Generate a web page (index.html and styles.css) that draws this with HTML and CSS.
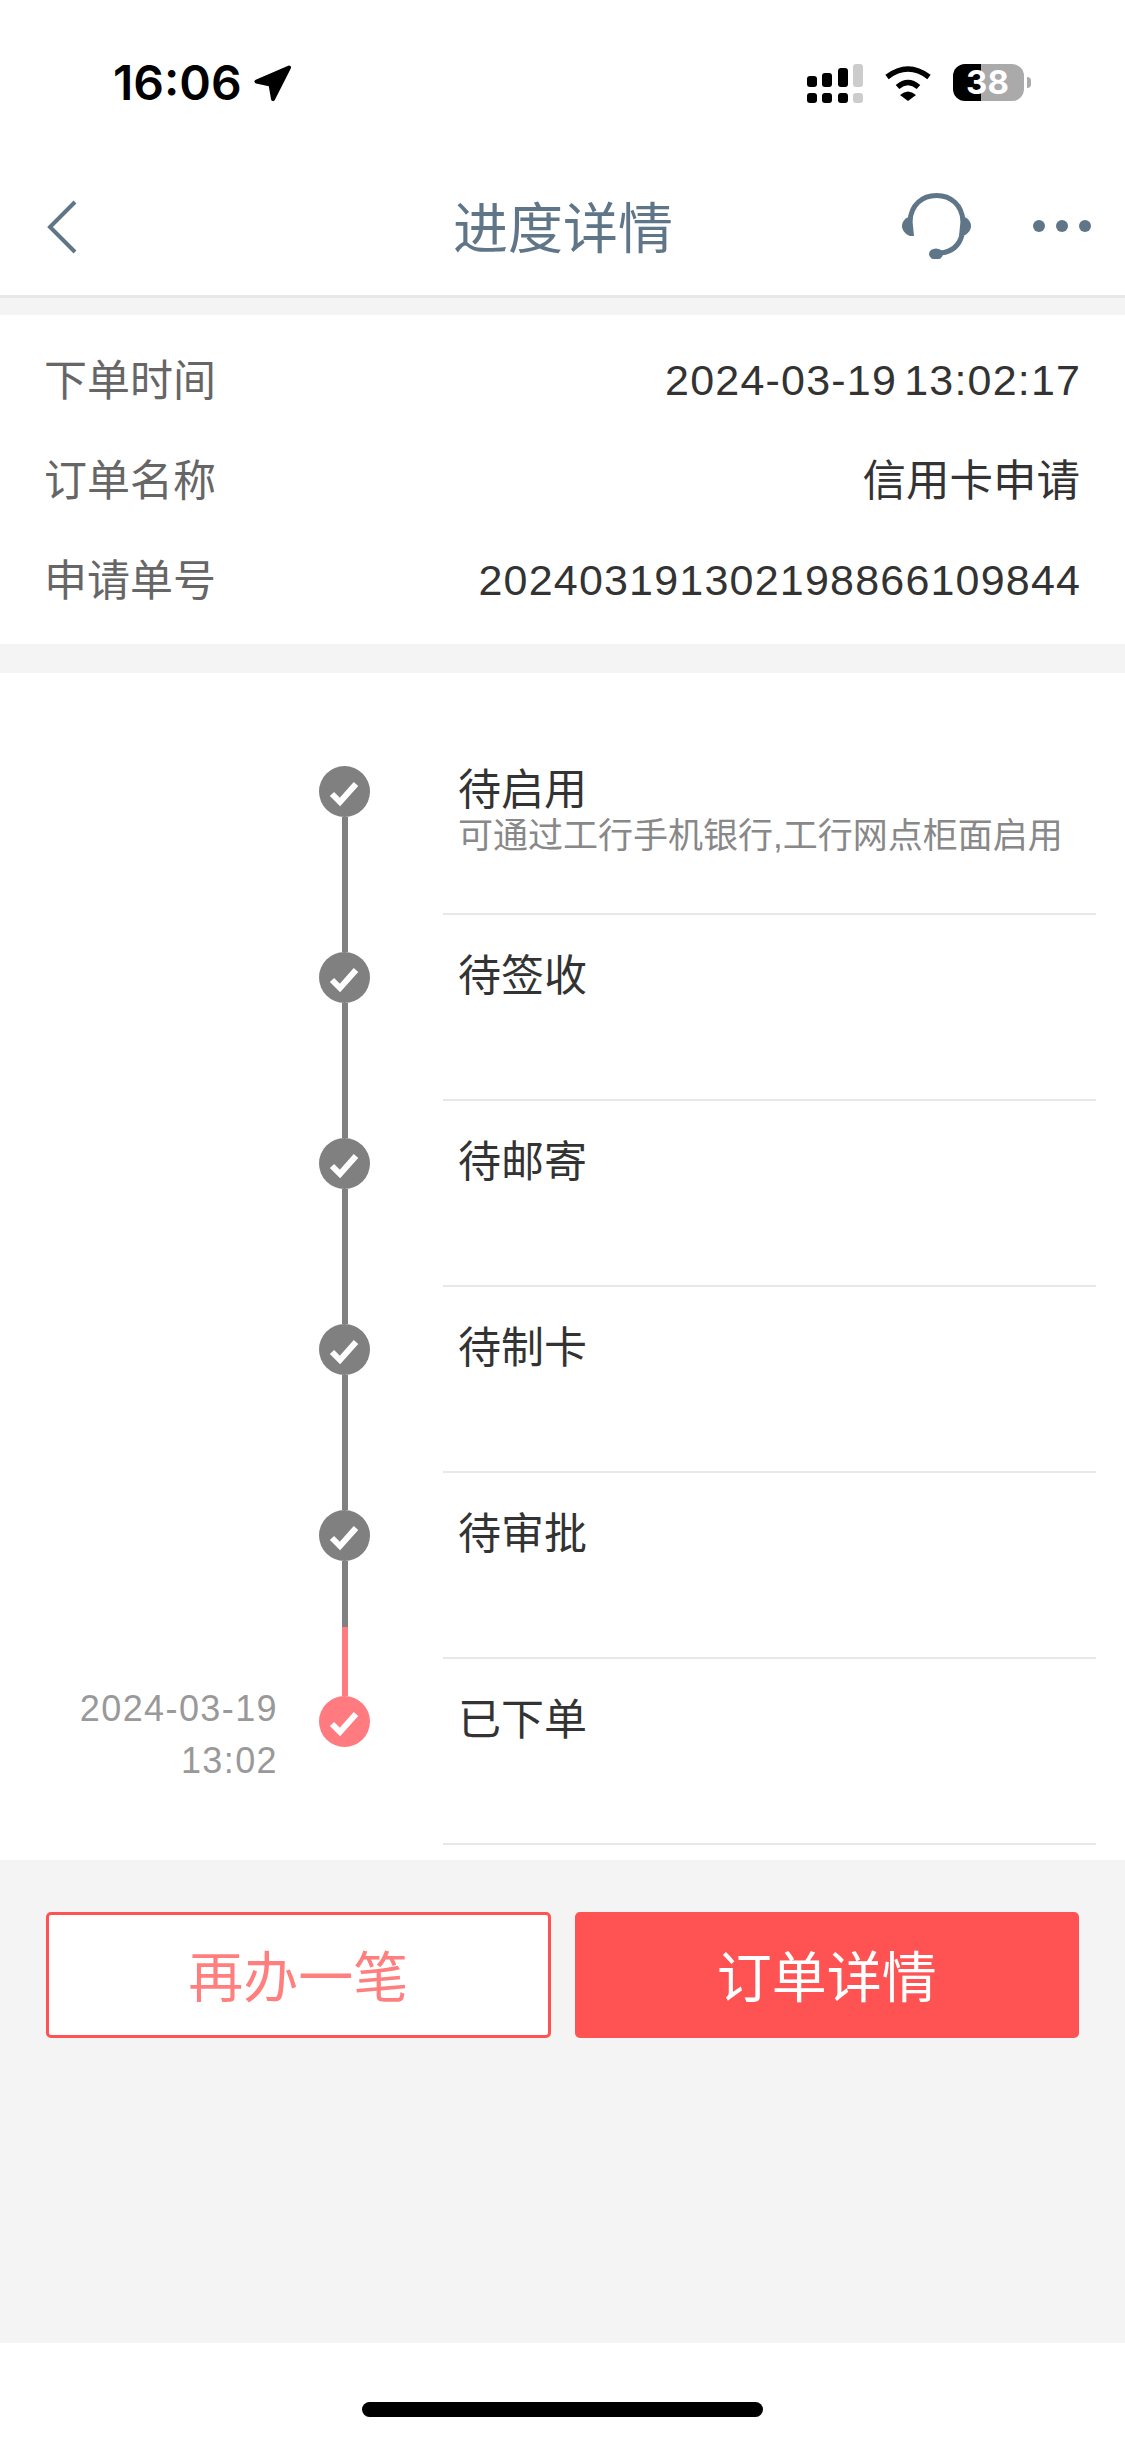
FILE: index.html
```html
<!DOCTYPE html>
<html lang="zh-CN">
<head>
    <meta charset="UTF-8">
    <meta name="viewport" content="width=device-width, initial-scale=1.0">
    <title>进度详情</title>
    <link rel="stylesheet" href="styles.css">
</head>
<body>
    <div class="page">
        <div class="status-bar">
            <div class="status-left">
                <span class="clock">16:06</span>
                <svg class="arrow" width="37" height="36" viewBox="0 0 37 36"><path d="M35 2.500 2.500 16.500 16.500 19.500 19 34Z" fill="#000" stroke="#000" stroke-width="4" stroke-linejoin="round"/></svg>
            </div>
            <div class="status-right">
                <div class="signal">
                    <div class="signal-col"><i class="h1"></i><i class="dot"></i></div>
                    <div class="signal-col"><i class="h2"></i><i class="dot"></i></div>
                    <div class="signal-col"><i class="h3"></i><i class="dot"></i></div>
                    <div class="signal-col off"><i class="h4"></i><i class="dot"></i></div>
                </div>
                <svg class="wifi" width="48" height="35" viewBox="0 0 48 35">
                    <path d="M3 11Q24 -5 45 11" fill="none" stroke="#000" stroke-width="5.500"/>
                    <path d="M13.500 21Q24 12 34.500 21" fill="none" stroke="#000" stroke-width="5.500"/>
                    <path d="M16 29Q24 22 32 29L24 35Z" fill="#000"/>
                </svg>
                <div class="battery">38</div>
                <div class="battery-nub"></div>
            </div>
        </div>

        <div class="nav">
            <svg class="back" width="30" height="54" viewBox="0 0 30 54"><path d="M28 2 3 27 28 52" fill="none" stroke="#5f7588" stroke-width="4"/></svg>
            <div class="nav-title">进度详情</div>
            <div class="nav-actions">
                <svg width="69" height="66" viewBox="0 0 69 66">
                    <path d="M8 28C9 12 20 2.500 34.500 2.500S60 12 61 28" fill="none" stroke="#5f7588" stroke-width="5"/>
                    <path d="M10 23 12 43 8 43C3 41 0 37 0 33 0 28 4 24 10 23Z" fill="#5f7588"/>
                    <path d="M59 23 57 43 61 43C66 41 69 37 69 33 69 28 65 24 59 23Z" fill="#5f7588"/>
                    <path d="M60 42C57 53 50 59 38 60" fill="none" stroke="#5f7588" stroke-width="5"/>
                    <ellipse cx="34" cy="61" rx="7" ry="5.500" fill="#5f7588"/>
                </svg>
                <div class="dots"><i></i><i></i><i></i></div>
            </div>
        </div>

        <div class="info">
            <div class="info-row"><span class="info-label">下单时间</span><span class="info-value info-date">2024-03-19 13:02:17</span></div>
            <div class="info-row"><span class="info-label">订单名称</span><span class="info-value info-cjk">信用卡申请</span></div>
            <div class="info-row"><span class="info-label">申请单号</span><span class="info-value">202403191302198866109844</span></div>
        </div>

        <div class="timeline">
            <div class="step">
                <div class="step-time"></div>
                <div class="axis">
                    <div class="seg seg-top seg-none"></div>
                    <svg class="node" viewBox="0 0 51 51"><circle cx="25.500" cy="25.500" r="25.500" fill="#808080"/><path d="M13 28 21 36 37 18" fill="none" stroke="#fff" stroke-width="6"/></svg>
                    <div class="seg seg-fill"></div>
                </div>
                <div class="step-body">
                    <div class="step-title">待启用</div>
                    <div class="step-sub">可通过工行手机银行,工行网点柜面启用</div>
                </div>
            </div>
            <div class="step">
                <div class="step-time"></div>
                <div class="axis">
                    <div class="seg seg-top"></div>
                    <svg class="node" viewBox="0 0 51 51"><circle cx="25.500" cy="25.500" r="25.500" fill="#808080"/><path d="M13 28 21 36 37 18" fill="none" stroke="#fff" stroke-width="6"/></svg>
                    <div class="seg seg-fill"></div>
                </div>
                <div class="step-body"><div class="step-title">待签收</div></div>
            </div>
            <div class="step">
                <div class="step-time"></div>
                <div class="axis">
                    <div class="seg seg-top"></div>
                    <svg class="node" viewBox="0 0 51 51"><circle cx="25.500" cy="25.500" r="25.500" fill="#808080"/><path d="M13 28 21 36 37 18" fill="none" stroke="#fff" stroke-width="6"/></svg>
                    <div class="seg seg-fill"></div>
                </div>
                <div class="step-body"><div class="step-title">待邮寄</div></div>
            </div>
            <div class="step">
                <div class="step-time"></div>
                <div class="axis">
                    <div class="seg seg-top"></div>
                    <svg class="node" viewBox="0 0 51 51"><circle cx="25.500" cy="25.500" r="25.500" fill="#808080"/><path d="M13 28 21 36 37 18" fill="none" stroke="#fff" stroke-width="6"/></svg>
                    <div class="seg seg-fill"></div>
                </div>
                <div class="step-body"><div class="step-title">待制卡</div></div>
            </div>
            <div class="step">
                <div class="step-time"></div>
                <div class="axis">
                    <div class="seg seg-top"></div>
                    <svg class="node" viewBox="0 0 51 51"><circle cx="25.500" cy="25.500" r="25.500" fill="#808080"/><path d="M13 28 21 36 37 18" fill="none" stroke="#fff" stroke-width="6"/></svg>
                    <div class="seg seg-fill"></div>
                    <div class="seg seg-red seg-tail"></div>
                </div>
                <div class="step-body"><div class="step-title">待审批</div></div>
            </div>
            <div class="step">
                <div class="step-time">2024-03-19<br>13:02</div>
                <div class="axis">
                    <div class="seg seg-top seg-red"></div>
                    <svg class="node" viewBox="0 0 51 51"><circle cx="25.500" cy="25.500" r="25.500" fill="#ff7b7f"/><path d="M13 28 21 36 37 18" fill="none" stroke="#fff" stroke-width="6"/></svg>
                </div>
                <div class="step-body"><div class="step-title">已下单</div></div>
            </div>
        </div>

        <div class="actions">
            <div class="btn btn-outline">再办一笔</div>
            <div class="btn btn-solid">订单详情</div>
        </div>

        <div class="home-area"><div class="home-bar"></div></div>
    </div>
</body>
</html>
```

FILE: styles.css
```css
* {
    box-sizing: border-box;
}
body {
    margin: 0;
    padding: 0;
    background-color: #fff;
    font-family: "Liberation Sans", "Noto Sans CJK SC", sans-serif;
}
.page {
    width: 1125px;
    height: 2439px;
    display: flex;
    flex-direction: column;
    background-color: #f4f4f4;
    overflow: hidden;
}

/* status bar */
.status-bar {
    height: 130px;
    padding: 64px 94px 0 113px;
    display: flex;
    justify-content: space-between;
    align-items: flex-start;
    background-color: #fff;
}
.status-left {
    display: flex;
    align-items: center;
    gap: 12px;
    height: 38px;
}
.clock {
    font-family: Inter, sans-serif;
    font-size: 48px;
    font-weight: 600;
    line-height: 38px;
    color: #000;
}
.status-right {
    display: flex;
    align-items: flex-start;
}
.signal {
    display: flex;
    gap: 5.500px;
    height: 39px;
    margin-right: 21px;
}
.signal-col {
    width: 10px;
    height: 39px;
    display: flex;
    flex-direction: column;
    justify-content: flex-end;
    gap: 6px;
}
.signal-col i {
    display: block;
    background-color: #000;
    border-radius: 3px;
}
.signal-col.off i {
    background-color: #ccc;
}
.signal-col .dot {
    height: 10px;
}
.signal-col .h1 {
    height: 11px;
}
.signal-col .h2 {
    height: 14px;
}
.signal-col .h3 {
    height: 19px;
}
.signal-col .h4 {
    height: 23px;
}
.wifi {
    margin-top: 2px;
    margin-right: 21px;
}
.battery {
    width: 71px;
    height: 37px;
    padding-right: 2px;
    border-radius: 12px;
    background: linear-gradient(to right, #000 28px, #aaa 28px);
    color: #fff;
    font-family: Inter, sans-serif;
    font-size: 33px;
    font-weight: 700;
    line-height: 37px;
    text-align: center;
}
.battery-nub {
    width: 4px;
    height: 11px;
    margin: 13px 0 0 3px;
    background-color: #aaa;
    border-radius: 0 4px 4px 0;
}

/* nav */
.nav {
    height: 168px;
    padding: 30px 34px 0 47px;
    display: grid;
    grid-template-columns: 406px 220px 1fr;
    align-items: center;
    background-color: #fff;
    border-bottom: 3px solid #e8e8e8;
}
.back {
    margin-bottom: 2px;
}
.nav-title {
    font-size: 55px;
    line-height: 64px;
    color: #5f7588;
    white-space: nowrap;
    margin-top: 3px;
}
.nav-actions {
    display: flex;
    align-items: center;
    justify-content: flex-end;
    gap: 62px;
    margin-bottom: 3px;
}
.dots {
    display: flex;
    gap: 11px;
}
.dots i {
    display: block;
    width: 12px;
    height: 12px;
    border-radius: 50%;
    background-color: #5f7588;
}

/* order info */
.info {
    margin-top: 17px;
    padding: 15px 45px 14px 44px;
    background-color: #fff;
}
.info-row {
    height: 100px;
    display: flex;
    justify-content: space-between;
    align-items: center;
    font-size: 43px;
}
.info-label {
    color: #666;
    margin-bottom: 6px;
}
.info-value {
    color: #333;
    letter-spacing: 1.200px;
    margin-right: -1.200px;
}
.info-date {
    word-spacing: -6px;
}
.info-cjk {
    font-size: 43.500px;
    letter-spacing: 0;
    margin: 0 0 6px;
}

/* timeline */
.timeline {
    margin-top: 29px;
    padding: 56px 29px 15px 0;
    background-color: #fff;
}
.step {
    height: 186px;
    display: flex;
}
.step-time {
    width: 278px;
    padding-top: 24px;
    text-align: right;
    font-size: 36px;
    line-height: 52px;
    color: #999;
    letter-spacing: 1.400px;
}
.axis {
    width: 51px;
    margin-left: 41px;
    display: flex;
    flex-direction: column;
    align-items: center;
}
.seg {
    width: 6px;
    background-color: #808080;
}
.seg-top {
    height: 37px;
}
.seg-none {
    background-color: transparent;
}
.seg-fill {
    flex: 1;
}
.seg-red {
    background-color: #ff7b7f;
}
.seg-tail {
    height: 32px;
}
.node {
    width: 51px;
    height: 51px;
    flex-shrink: 0;
}
.step-body {
    flex: 1;
    margin-left: 73px;
    padding: 36px 0 0 15px;
    border-bottom: 2px solid #e8e8e8;
}
.step-title {
    font-size: 43px;
    line-height: 50px;
    color: #333;
}
.step-sub {
    font-size: 35px;
    line-height: 42px;
    color: #888;
    white-space: nowrap;
}

/* buttons */
.actions {
    padding: 52px 46px 0 46px;
    display: flex;
    gap: 24px;
}
.btn {
    flex: 1;
    height: 126px;
    padding-bottom: 5px;
    border-radius: 5px;
    border: 3px solid #ff5252;
    display: flex;
    align-items: center;
    justify-content: center;
    font-size: 55px;
}
.btn-outline {
    background-color: #fff;
    color: #ff7f7f;
}
.btn-solid {
    background-color: #ff5252;
    color: #fff;
}

/* home indicator */
.home-area {
    margin-top: auto;
    height: 96px;
    padding-top: 59px;
    background-color: #fff;
}
.home-bar {
    width: 401px;
    height: 15px;
    margin: 0 auto;
    background-color: #000;
    border-radius: 8px;
}
```
